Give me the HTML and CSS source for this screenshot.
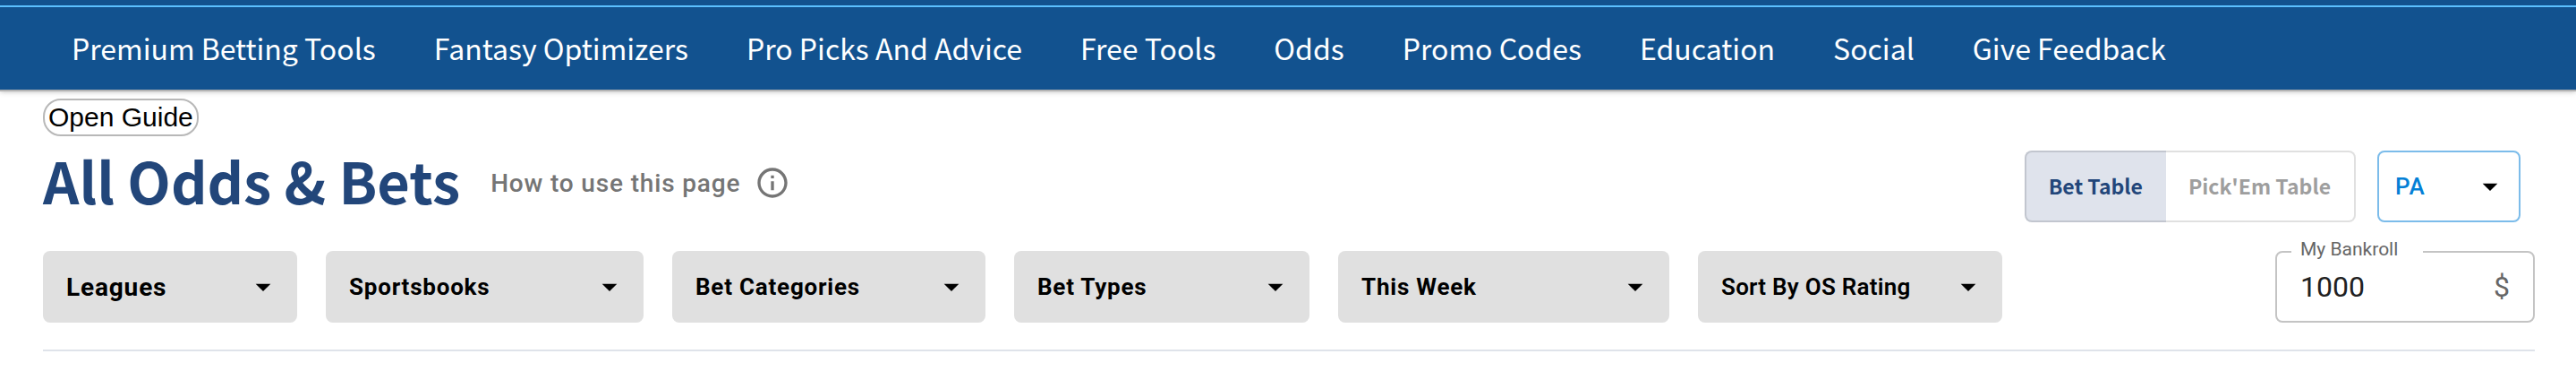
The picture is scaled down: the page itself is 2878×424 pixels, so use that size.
FILE: index.html
```html
<!DOCTYPE html>
<html lang="en">
<head>
  <meta charset="UTF-8">
  <meta name="viewport" content="width=device-width, initial-scale=1.0">
  <title>All Odds &amp; Bets</title>
  <link rel="stylesheet" href="styles.css">
</head>
<body>
  <header class="site-header">
    <nav class="main-nav">
      <a href="#">Premium Betting Tools</a>
      <a href="#">Fantasy Optimizers</a>
      <a href="#">Pro Picks And Advice</a>
      <a href="#">Free Tools</a>
      <a href="#">Odds</a>
      <a href="#">Promo Codes</a>
      <a href="#">Education</a>
      <a href="#">Social</a>
      <a href="#">Give Feedback</a>
    </nav>
  </header>

  <main class="page">
    <button class="guide-btn" type="button">Open Guide</button>

    <div class="title-row">
      <div class="title-group">
        <h1>All Odds &amp; Bets</h1>
        <button class="how-to" type="button">
          How to use this page
          <svg class="info-icon" viewBox="0 0 24 24" aria-hidden="true">
            <path d="M11 7h2v2h-2zm0 4h2v6h-2zm1-9C6.480 2 2 6.480 2 12s4.480 10 10 10 10-4.480 10-10S17.520 2 12 2zm0 18c-4.410 0-8-3.590-8-8s3.590-8 8-8 8 3.590 8 8-3.590 8-8 8z"/>
          </svg>
        </button>
      </div>

      <div class="view-controls">
        <div class="toggle">
          <button class="active" type="button" aria-pressed="true">Bet Table</button>
          <button type="button" aria-pressed="false">Pick'Em Table</button>
        </div>
        <div class="select-box state">
          <select aria-label="State">
            <option>PA</option>
            <option>NJ</option>
            <option>NY</option>
          </select>
          <svg class="arrow" viewBox="0 0 24 24" aria-hidden="true"><path d="M7 10l5 5 5-5z"/></svg>
        </div>
      </div>
    </div>

    <div class="filter-row">
      <div class="filters">
        <div class="select-box leagues">
          <select aria-label="Leagues">
            <option>Leagues</option>
          </select>
          <svg class="arrow" viewBox="0 0 24 24" aria-hidden="true"><path d="M7 10l5 5 5-5z"/></svg>
        </div>
        <div class="select-box sportsbooks">
          <select aria-label="Sportsbooks">
            <option>Sportsbooks</option>
          </select>
          <svg class="arrow" viewBox="0 0 24 24" aria-hidden="true"><path d="M7 10l5 5 5-5z"/></svg>
        </div>
        <div class="select-box categories">
          <select aria-label="Bet Categories">
            <option>Bet Categories</option>
          </select>
          <svg class="arrow" viewBox="0 0 24 24" aria-hidden="true"><path d="M7 10l5 5 5-5z"/></svg>
        </div>
        <div class="select-box types">
          <select aria-label="Bet Types">
            <option>Bet Types</option>
          </select>
          <svg class="arrow" viewBox="0 0 24 24" aria-hidden="true"><path d="M7 10l5 5 5-5z"/></svg>
        </div>
        <div class="select-box dates">
          <select aria-label="Date range">
            <option>This Week</option>
          </select>
          <svg class="arrow" viewBox="0 0 24 24" aria-hidden="true"><path d="M7 10l5 5 5-5z"/></svg>
        </div>
        <div class="select-box sort">
          <select aria-label="Sort order">
            <option>Sort By OS Rating</option>
          </select>
          <svg class="arrow" viewBox="0 0 24 24" aria-hidden="true"><path d="M7 10l5 5 5-5z"/></svg>
        </div>
      </div>

      <div class="bankroll">
        <label for="bankroll">My Bankroll</label>
        <input id="bankroll" type="text" inputmode="numeric" value="1000">
        <span class="unit">$</span>
      </div>
    </div>
  </main>
</body>
</html>
```

FILE: styles.css
```css
* {
  box-sizing: border-box;
}

body {
  margin: 0;
  background-color: #fff;
  font-family: Roboto, sans-serif;
}

button,
select,
input {
  font-family: inherit;
  margin: 0;
}

button,
select {
  cursor: pointer;
}

/* Header */
.site-header {
  padding-top: 6px;
  background-color: #12528f;
  box-shadow: 0 2px 0 #b3b3b3, 0 2px 6px rgba(0, 0, 0, 0.3);
}

.main-nav {
  display: flex;
  gap: 65px;
  padding: 21px 80px 23px;
  border-top: 2px solid #5bc0ff;
}

.main-nav a {
  color: #fff;
  font-family: "Noto Sans CJK SC", sans-serif;
  font-size: 32px;
  line-height: 48px;
  text-decoration: none;
  white-space: nowrap;
}

/* Page */
.page {
  padding: 10px 46px 32px 48px;
}

.guide-btn {
  display: block;
  padding: 2px 4px;
  border: 2px solid #b8b8b8;
  border-radius: 20px;
  background-color: #fff;
  color: #000;
  font-family: "Liberation Sans", Arial, sans-serif;
  font-size: 30px;
  line-height: 34px;
}

.title-row {
  display: flex;
  justify-content: space-between;
  align-items: flex-start;
  margin-top: 16px;
}

.title-group {
  display: flex;
  align-items: center;
  gap: 34px;
}

h1 {
  margin: 0;
  padding-bottom: 6px;
  color: #22467a;
  font-family: "Noto Sans CJK SC", sans-serif;
  font-size: 63px;
  font-weight: 700;
  line-height: 66px;
  white-space: nowrap;
}

.how-to {
  display: flex;
  align-items: center;
  gap: 16px;
  padding: 0;
  border: none;
  background: none;
  color: #757575;
  font-size: 28px;
  font-weight: 500;
  letter-spacing: 0.03em;
  white-space: nowrap;
}

.info-icon {
  width: 40px;
  height: 40px;
  fill: currentColor;
}

.view-controls {
  display: flex;
  gap: 24px;
  padding-right: 16px;
}

.toggle {
  display: flex;
}

.toggle button {
  height: 80px;
  padding: 0 26px 2px 25px;
  border: 2px solid #e0e0e0;
  border-left: none;
  border-radius: 0 8px 8px 0;
  background-color: #fff;
  color: #9e9e9e;
  font-family: "Noto Sans CJK SC", sans-serif;
  font-size: 23px;
  font-weight: 700;
  white-space: nowrap;
}

.toggle .active {
  border: 2px solid #c2c6cf;
  border-right: none;
  border-radius: 8px 0 0 8px;
  background-color: #dfe3ec;
  color: #22467a;
}

/* Drop-downs */
.select-box {
  position: relative;
  height: 80px;
}

.select-box select {
  appearance: none;
  width: 100%;
  height: 100%;
  padding: 0 56px 0 26px;
  border: none;
  border-radius: 8px;
  background-color: #e0e0e0;
  color: #000;
  font-size: 26px;
  font-weight: 700;
  letter-spacing: 0.03em;
}

.arrow {
  position: absolute;
  top: 20px;
  right: 18px;
  width: 40px;
  height: 40px;
  pointer-events: none;
}

.state {
  width: 160px;
}

.state select {
  padding-left: 18px;
  border: 2px solid #7cbcea;
  background-color: #fff;
  color: #0480d6;
  font-weight: 500;
}

.state .arrow {
  right: 14px;
}

.leagues {
  width: 284px;
}

.leagues select {
  font-size: 28px;
}

.sportsbooks {
  width: 355px;
}

.categories {
  width: 350px;
}

.types {
  width: 330px;
}

.dates {
  width: 370px;
}

.sort {
  width: 340px;
}

.sort select {
  font-weight: 600;
  letter-spacing: 0.01em;
}

/* Filters */
.filter-row {
  display: flex;
  justify-content: space-between;
  margin-top: 32px;
  padding-bottom: 30px;
  border-bottom: 2px solid #dfe3ea;
}

.filters {
  display: flex;
  gap: 32px;
}

.bankroll {
  position: relative;
  display: flex;
  align-items: center;
  width: 290px;
  height: 80px;
  padding: 0 26px;
  border: 2px solid #c4c4c4;
  border-radius: 8px;
}

.bankroll label {
  position: absolute;
  top: -16px;
  left: 16px;
  padding: 0 28px 0 10px;
  background-color: #fff;
  color: #666;
  font-size: 21px;
  line-height: 24px;
}

.bankroll input {
  flex: 1;
  min-width: 0;
  padding: 0;
  border: none;
  outline: none;
  background: none;
  color: #212121;
  font-size: 32px;
}

.unit {
  color: #666;
  font-size: 32px;
}
```
